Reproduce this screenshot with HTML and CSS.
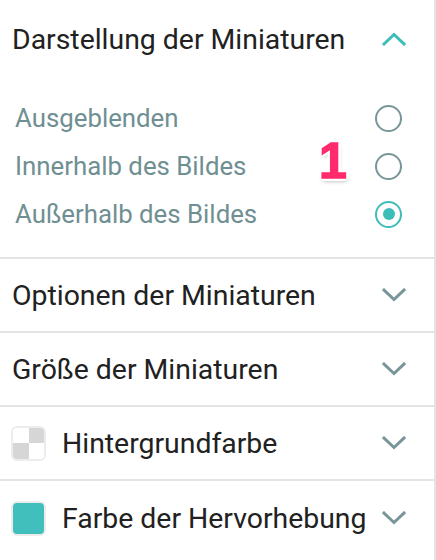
FILE: index.html
```html
<!DOCTYPE html>
<html lang="de">
<head>
<meta charset="utf-8">
<link rel="stylesheet" href="styles.css">
</head>
<body>
<div class="panel">
  <section class="group">
    <div class="row head">
      <span class="title">Darstellung der Miniaturen</span>
      <svg class="chev up" viewBox="0 0 24 14" width="24" height="14"><path d="M2 12 L12 2.5 L22 12" /></svg>
    </div>
    <div class="options">
      <div class="opt"><span>Ausgeblenden</span><span class="radio"></span></div>
      <div class="opt"><span>Innerhalb des Bildes</span><span class="radio"></span><span class="badge">1</span></div>
      <div class="opt"><span>Außerhalb des Bildes</span><span class="radio on"></span></div>
    </div>
  </section>
  <section class="row">
    <span class="title">Optionen der Miniaturen</span>
    <svg class="chev" viewBox="0 0 24 14" width="24" height="14"><path d="M2 2 L12 11.5 L22 2" /></svg>
  </section>
  <section class="row">
    <span class="title">Größe der Miniaturen</span>
    <svg class="chev" viewBox="0 0 24 14" width="24" height="14"><path d="M2 2 L12 11.5 L22 2" /></svg>
  </section>
  <section class="row">
    <span class="swatch checker"><i></i><i></i><i></i><i></i></span>
    <span class="title">Hintergrundfarbe</span>
    <svg class="chev" viewBox="0 0 24 14" width="24" height="14"><path d="M2 2 L12 11.5 L22 2" /></svg>
  </section>
  <section class="row last">
    <span class="swatch teal"></span>
    <span class="title">Farbe der Hervorhebung</span>
    <svg class="chev" viewBox="0 0 24 14" width="24" height="14"><path d="M2 2 L12 11.5 L22 2" /></svg>
  </section>
</div>
</body>
</html>
```
FILE: styles.css
```css
* { box-sizing: border-box; }
html, body { margin: 0; padding: 0; background: #fff; }
body { font-family: Roboto, "Noto Sans", sans-serif; color: #212121; }

.panel {
  width: 436px;
  height: 560px;
  border-right: 2px solid #e4e4e4;
  overflow: hidden;
}

.group, .row { border-bottom: 2px solid #e4e4e4; }
.row.last { border-bottom: none; }

.row {
  height: 74px;
  display: flex;
  align-items: center;
  padding: 0 28px 0 12px;
}
.row.head { height: 78px; border-bottom: none; }

.title {
  flex: 1;
  font-size: 28.4px;
  white-space: nowrap;
}

.chev { flex: none; }
.chev path { fill: none; stroke: #78969a; stroke-width: 3; stroke-linecap: square; }
.chev.up path { stroke: #3dbdb8; }

.options { padding: 16px 0 19px 15px; }
.opt {
  position: relative;
  height: 48px;
  display: flex;
  align-items: center;
  padding-right: 32px;
  font-size: 25.8px;
  color: #6f8f93;
}
.opt span:first-child { flex: 1; }

.radio {
  width: 27px;
  height: 27px;
  border: 2.5px solid #78969a;
  border-radius: 50%;
  display: flex;
  align-items: center;
  justify-content: center;
}
.radio.on { border-color: #3dbdb8; }
.radio.on::after {
  content: "";
  width: 12px;
  height: 12px;
  border-radius: 50%;
  background: #3dbdb8;
}

.badge {
  position: absolute;
  left: 304px;
  top: -6px;
  font-family: "Liberation Sans", Arial, sans-serif;
  font-weight: 700;
  font-size: 50px;
  line-height: 1;
  color: #ff2b6d;
  -webkit-text-stroke: 1.5px #ff2b6d;
  text-shadow: 3px 0 0 #fff, -3px 0 0 #fff, 0 3px 0 #fff, 0 -3px 0 #fff,
    2px 2px 0 #fff, -2px -2px 0 #fff, 2px -2px 0 #fff, -2px 2px 0 #fff,
    1px 3px 4px rgba(0,0,0,0.35);
}

.swatch {
  flex: none;
  width: 35px;
  height: 35px;
  border: 2px solid #ececec;
  border-radius: 6px;
  margin-right: 16px;
  margin-left: -1px;
  overflow: hidden;
}
.swatch.teal { background: #40bfbc; }
.swatch.checker {
  display: grid;
  grid-template-columns: 1fr 1fr;
  grid-template-rows: 1fr 1fr;
}
.swatch.checker i:nth-child(1), .swatch.checker i:nth-child(4) { background: #fff; }
.swatch.checker i:nth-child(2), .swatch.checker i:nth-child(3) { background: #d6d6d6; }
```
